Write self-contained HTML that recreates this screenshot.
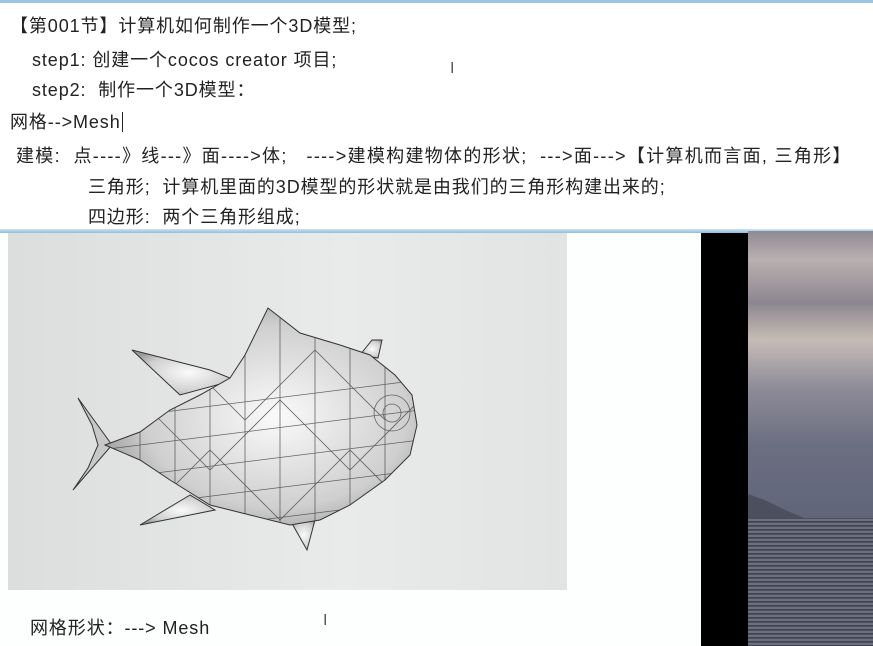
<!DOCTYPE html>
<html><head><meta charset="utf-8"><style>
*{margin:0;padding:0}
body{width:873px;height:646px;overflow:hidden;background:#fdfefe;position:relative;font-family:"Liberation Sans","Noto Sans CJK SC",sans-serif;color:#222}
.t{position:absolute;font-size:18px;letter-spacing:0.9px;white-space:nowrap;line-height:20px}
</style></head><body>
<div style="position:absolute;left:0;top:0;width:873px;height:3px;background:#9cc4e4"></div>
<div style="position:absolute;left:0;top:3px;width:873px;height:227px;background:#fff"></div>
<div class="t" style="left:10px;top:16px">【第001节】计算机如何制作一个3D模型;</div>
<div class="t" style="left:32px;top:50px">step1: 创建一个cocos creator 项目;</div>
<div class="t" style="left:32px;top:80px">step2:&nbsp; 制作一个3D模型：</div>
<div class="t" style="left:10px;top:112px">网格-->Mesh<span style="border-left:1px solid #222;margin-left:1px"></span></div>
<div class="t" style="left:16px;top:146px;letter-spacing:1.3px">建模:&nbsp; 点----》线---》面---->体;&nbsp;&nbsp; ---->建模构建物体的形状;&nbsp; --->面--->【计算机而言面, 三角形】</div>
<div class="t" style="left:88px;top:177px">三角形;&nbsp; 计算机里面的3D模型的形状就是由我们的三角形构建出来的;</div>
<div class="t" style="left:88px;top:207px">四边形:&nbsp; 两个三角形组成;</div>
<div style="position:absolute;left:450px;top:60px;font-size:16px;color:#555">I</div>
<div style="position:absolute;left:0;top:229px;width:873px;height:4px;background:linear-gradient(#cfe3f3,#8fbde0)"></div>
<div style="position:absolute;left:8px;top:233px;width:559px;height:357px;background:linear-gradient(90deg,#dcdedd,#e9ebea 60%,#e2e4e4)"></div>
<svg style="position:absolute;left:0;top:0" width="873" height="646">
<defs>
<radialGradient id="g" cx="0.55" cy="0.5" r="0.6"><stop offset="0" stop-color="#fafafa"/><stop offset="0.7" stop-color="#cfcfcf"/><stop offset="1" stop-color="#9a9a9a"/></radialGradient>
<clipPath id="c"><path d="M105,445 L140,432 L170,410 L200,395 L230,378 L245,355 L268,308 L300,333 L340,345 L370,355 L395,375 L412,395 L417,425 L410,455 L385,480 L350,505 L320,520 L290,525 L250,515 L210,505 L170,480 L140,460 Z"/></clipPath>
</defs>
<g stroke="#333" stroke-width="1" fill="url(#g)">
<path d="M112,445 L78,398 L92,425 L98,445 L88,468 L73,490 Z" fill="#c8c8c8"/>
<path d="M180,395 L132,350 L210,370 L235,380 Z"/>
<path d="M190,495 L140,525 L215,510 Z"/>
<path d="M290,520 L307,550 L315,520 Z"/>
<path d="M360,355 L372,340 L382,340 L378,358 Z"/>
<path d="M105,445 L140,432 L170,410 L200,395 L230,378 L245,355 L268,308 L300,333 L340,345 L370,355 L395,375 L412,395 L417,425 L410,455 L385,480 L350,505 L320,520 L290,525 L250,515 L210,505 L170,480 L140,460 Z"/>
</g>
<g clip-path="url(#c)" stroke="#444" stroke-width="0.8" fill="none" opacity="0.8">
<path d="M140,400 L140,520 M175,380 L175,520 M210,360 L210,520 M245,330 L245,520 M280,310 L280,530 M315,320 L315,530 M350,330 L350,530 M385,340 L385,520"/>
<path d="M100,420 L420,380 M100,450 L420,410 M100,480 L420,440 M100,510 L420,470 M100,540 L420,500"/>
<path d="M140,400 L210,470 L280,400 L350,470 L420,400 M140,520 L210,450 L280,520 L350,450 L420,520 M175,350 L245,420 L315,350 L385,420"/>
<circle cx="392" cy="413" r="18"/><circle cx="392" cy="413" r="9"/>
</g>
</svg>
<div style="position:absolute;left:701px;top:233px;width:47px;height:413px;background:#000"></div>
<div style="position:absolute;left:748px;top:231px;width:125px;height:287px;background:linear-gradient(#8f8b93 0%,#b9b0b1 10%,#8d8690 25%,#c6bcb6 38%,#8e8b98 55%,#6b6e80 75%,#60657a 100%)"></div>
<div style="position:absolute;left:748px;top:494px;width:56px;height:24px;background:#4b4f5e;clip-path:polygon(0 0,30% 25%,60% 60%,100% 100%,0 100%)"></div>
<div style="position:absolute;left:748px;top:518px;width:125px;height:128px;background:repeating-linear-gradient(#3a3e4c 0,#7d8292 2px,#2d313e 4px)"></div>
<div class="t" style="left:30px;top:618px">网格形状：---> Mesh</div>
<div style="position:absolute;left:323px;top:612px;font-size:16px;color:#555">I</div>
</body></html>
